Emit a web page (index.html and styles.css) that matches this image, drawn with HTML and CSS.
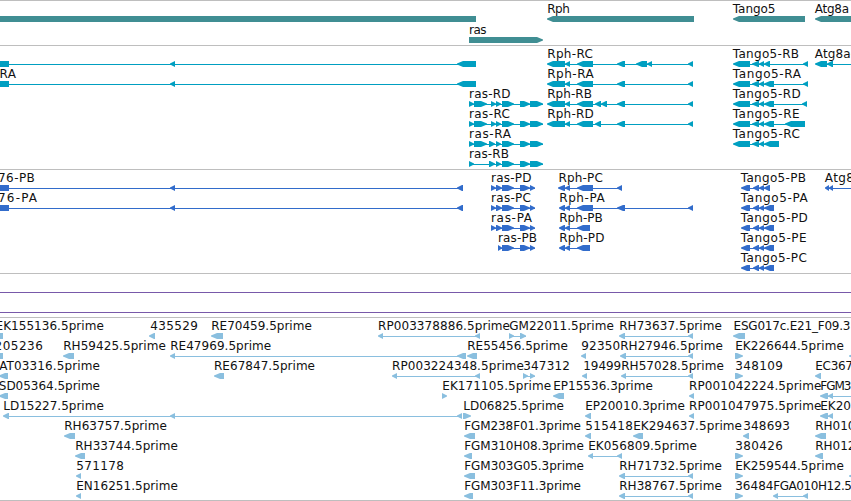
FILE: index.html
```html
<!DOCTYPE html>
<html lang="en">
<head>
  <meta charset="UTF-8">
  <title>Genome Browser</title>
  <link rel="stylesheet" href="styles.css">
</head>
<body>
  <div class="browser">
    <svg class="track genes" id="genes"></svg>
    <svg class="track transcripts" id="transcripts"></svg>
    <svg class="track proteins" id="proteins"></svg>
    <svg class="track spans" id="spans"></svg>
    <svg class="track ests" id="ests"></svg>
  </div>
  <script src="script.js"></script>
</body>
</html>
```

FILE: styles.css
```css
* { margin: 0; padding: 0; box-sizing: border-box; }
body {
  background: #fff;
  overflow: hidden;
}
.browser {
  display: flex;
  flex-direction: column;
  width: 851px;
  height: 501px;
  border-bottom: 1px solid #bebebe;
}
.track {
  display: block;
  width: 100%;
  flex: none;
  border-top: 1px solid #bebebe;
  overflow: hidden;
}
.track text {
  font-family: "DejaVu Sans", sans-serif;
  font-size: 12px;
  fill: #111;
}
.genes { height: 45px; color: #408e93; }
.transcripts { height: 124px; color: #009fc1; }
.proteins { height: 104px; color: #326ccb; }
.spans { height: 44px; color: #7859a9; }
.ests { height: 183px; color: #8abfdf; }
.glyph { fill: currentColor; }
```

FILE: script.js
```js
// feature: [row, label, label start, label end, strand, blocks, line end]
const genes = [
  [0, '', 0, 0, '-', [[-20, 476]]],
  [0, 'Rph', 547.7, 569.3, '-', [[547, 694]]],
  [0, 'Tango5', 733.3, 775, '-', [[733, 805]]],
  [0, 'Atg8a', 815.3, 848.5, '-', [[815, 870]]],
  [1, 'ras', 469.5, 486, '+', [[469, 543]]]
];

const transcripts = [
  [0, '', 0, 0, '-', [[-20, 9], [170, 175], [457, 476]]],
  [1, 'RA', 0, 15.5, '-', [[-20, 9], [170, 175], [457, 476]]],
  [2, 'ras-RD', 469.5, 510, '+', [[469, 474], [474, 487], [491, 496], [496, 501], [502, 514], [520, 530], [530, 543]]],
  [3, 'ras-RC', 469.5, 509.5, '+', [[469, 474], [474, 487], [491, 496], [496, 501], [502, 514], [520, 530], [530, 543]]],
  [4, 'ras-RA', 469.5, 510.5, '+', [[469, 474], [474, 487], [489, 495], [496, 501], [502, 514], [520, 530], [530, 543]]],
  [5, 'ras-RB', 469.5, 508.5, '+', [[469, 474], [489, 495], [496, 501], [502, 514], [520, 530], [530, 543]]],
  [0, 'Rph-RC', 547.7, 592.5, '-', [[547, 565], [565, 570], [577, 593], [617, 625], [636, 647], [647, 652], [688, 693]]],
  [1, 'Rph-RA', 547.7, 593.3, '-', [[547, 565], [565, 570], [577, 593], [617, 625], [688, 693]]],
  [2, 'Rph-RB', 547.7, 591.5, '-', [[547, 565], [565, 570], [577, 593], [595, 601], [601, 607], [617, 625], [688, 693]]],
  [3, 'Rph-RD', 547.7, 593.3, '-', [[547, 565], [565, 570], [577, 593], [595, 601], [617, 625], [688, 693]]],
  [0, 'Tango5-RB', 733.3, 798.5, '-', [[733, 750], [752, 759], [759, 764], [764, 770], [803, 808]]],
  [1, 'Tango5-RA', 733.3, 800.5, '-', [[733, 750], [752, 759], [759, 764], [764, 774], [803, 808]]],
  [2, 'Tango5-RD', 733.3, 800.3, '-', [[733, 750], [752, 759], [759, 764], [764, 774], [802, 807]]],
  [3, 'Tango5-RE', 733.3, 799, '-', [[733, 750], [752, 759], [759, 764], [764, 774], [785, 805]]],
  [4, 'Tango5-RC', 733.3, 799.3, '-', [[733, 750], [752, 759], [759, 764], [764, 779]]],
  [0, 'Atg8a-RA', 815.3, 871, '-', [[815, 827], [827, 833]], 870]
];

const proteins = [
  [0, '76-PB', -1.5, 34.3, '-', [[-20, 9], [170, 175], [457, 463]]],
  [1, '76-PA', -1.5, 36.5, '-', [[-20, 9], [170, 175], [457, 463]]],
  [0, 'ras-PD', 491.5, 531, '+', [[491, 496], [496, 502], [502, 514], [520, 530], [530, 535]]],
  [1, 'ras-PC', 491.5, 530.5, '+', [[491, 496], [496, 502], [502, 514], [520, 530], [530, 535]]],
  [2, 'ras-PA', 491.5, 531.5, '+', [[491, 496], [496, 502], [502, 514], [520, 530], [530, 535]]],
  [3, 'ras-PB', 498.5, 536.5, '+', [[498, 502], [502, 514], [520, 530], [530, 535]]],
  [0, 'Rph-PC', 559, 602.3, '-', [[558, 565], [565, 570], [577, 593], [617, 622]]],
  [1, 'Rph-PA', 559.7, 604.3, '-', [[559, 565], [565, 570], [577, 593], [617, 625], [688, 693]]],
  [2, 'Rph-PB', 559.7, 602.3, '-', [[559, 565], [565, 570], [577, 590]]],
  [3, 'Rph-PD', 559.7, 604, '-', [[559, 565], [565, 570], [577, 590]]],
  [0, 'Tango5-PB', 741.3, 805.5, '-', [[741, 750], [753, 759], [759, 764], [764, 770]]],
  [1, 'Tango5-PA', 741.3, 807.3, '-', [[741, 750], [753, 759], [759, 764], [764, 774]]],
  [2, 'Tango5-PD', 741.3, 807.3, '-', [[741, 750], [753, 759], [759, 764], [764, 774]]],
  [3, 'Tango5-PE', 741.3, 806, '-', [[741, 750], [753, 759], [759, 764], [764, 774]]],
  [4, 'Tango5-PC', 741.3, 806.3, '-', [[741, 750], [753, 759], [759, 764], [764, 774]]],
  [0, 'Atg8a-PA', 825.3, 881, '-', [[825, 829], [829, 833]], 870]
];

// unlabelled spans that cross the whole view
const spans = [
  [0, '', 0, 0, '-', [], 870],
  [1, '', 0, 0, '-', [], 870]
];

const ests = [
  [0, 'EK155136.5prime', -4, 103.3, '-', [[-8, 3]]],
  [0, '435529', 150.7, 197.3, '-', [[149, 155]]],
  [0, 'RE70459.5prime', 211.7, 311.3, '-', [[211, 223]]],
  [0, 'RP003378886.5prime', 378.5, 509.5, '-', [[378, 383], [475, 480]]],
  [0, 'GM22011.5prime', 509.7, 613.3, '+', [[509, 514], [520, 526]]],
  [0, 'RH73637.5prime', 619.7, 721.3, '-', [[619, 625], [688, 693]]],
  [0, 'ESG017c.E21_F09.3', 734, 850, '-', [[733, 745]]],
  [1, '205236', -5, 42.3, '-', [[-8, 3]]],
  [1, 'RH59425.5prime', 63.7, 165.3, '-', [[63, 74]]],
  [1, 'RE47969.5prime', 170.7, 270.7, '-', [[170, 175], [457, 466]]],
  [1, 'RE55456.5prime', 467.7, 567.3, '-', [[467, 477]]],
  [1, '92350', 581.7, 619.7, '-', [[581, 586]]],
  [1, 'RH27946.5prime', 620.7, 722.3, '-', [[620, 626], [688, 693]]],
  [1, 'EK226644.5prime', 735.7, 843.3, '+', [[735, 743]]],
  [1, '', 0, 0, '-', [[849, 856]]],
  [2, 'AT03316.5prime', -0.3, 99.5, '-', [[-1, 8]]],
  [2, 'RE67847.5prime', 214.5, 314.5, '-', [[214, 224]]],
  [2, 'RP003224348.5prime', 392.5, 523.5, '-', [[392, 397], [475, 480]]],
  [2, '347312', 523.7, 569.5, '+', [[523, 528], [530, 535]]],
  [2, '19499', 583.7, 620.7, '-', [[582, 587]]],
  [2, 'RH57028.5prime', 621.7, 723.3, '-', [[621, 626], [688, 693]]],
  [2, '348109', 735.7, 782.3, '+', [[735, 743]]],
  [2, 'EC367', 815.7, 852.5, '-', [[815, 821]]],
  [3, 'SD05364.5prime', -0.7, 99.5, '-', [[-1, 8]]],
  [3, 'EK171105.5prime', 442.7, 550.7, '+', [[442, 447]]],
  [3, 'EP15536.3prime', 553.7, 652.3, '-', [[553, 564]]],
  [3, 'RP001042224.5prime', 689.5, 821, '-', [[689, 694]]],
  [3, 'FGM3', 820.7, 851, '-', [[820, 828], [828, 833]], 870],
  [4, 'LD15227.5prime', 3.7, 103.3, '-', [[3, 9], [170, 175], [457, 462]]],
  [4, 'LD06825.5prime', 463.7, 563.5, '+', [[463, 471]]],
  [4, 'EP20010.3prime', 585.7, 684.3, '-', [[585, 591]]],
  [4, 'RP001047975.5prime', 689.5, 821, '-', [[689, 694]]],
  [4, 'EK20', 820.7, 850.5, '-', [[820, 828], [828, 833]]],
  [5, 'RH63757.5prime', 64.7, 166.3, '-', [[64, 75]]],
  [5, 'FGM238F01.3prime', 464.7, 580.5, '-', [[464, 475]]],
  [5, '515418', 585.7, 632.5, '-', [[585, 591]]],
  [5, 'EK294637.5prime', 633.7, 741.5, '-', [[633, 643]]],
  [5, '348693', 743.7, 789.5, '-', [[743, 749]]],
  [5, 'RH010', 815.7, 855, '-', [[815, 826]]],
  [6, 'RH33744.5prime', 75.7, 177.3, '-', [[75, 85]]],
  [6, 'FGM310H08.3prime', 464.7, 583.3, '-', [[464, 472]]],
  [6, 'EK056809.5prime', 588.7, 696.5, '-', [[588, 593], [617, 622]]],
  [6, '380426', 735.7, 782.3, '+', [[735, 743]]],
  [6, 'RH012', 815.7, 855, '-', [[815, 823]]],
  [7, '571178', 76.7, 123.5, '-', [[76, 81]]],
  [7, 'FGM303G05.3prime', 464.7, 583.5, '-', [[464, 475]]],
  [7, 'RH71732.5prime', 619.7, 721.3, '-', [[619, 625], [688, 693]]],
  [7, 'EK259544.5prime', 735.7, 843.3, '+', [[735, 743]]],
  [7, '', 0, 0, '-', [[849, 856]]],
  [8, 'EN16251.5prime', 76.7, 177.3, '-', [[76, 81]]],
  [8, 'FGM303F11.3prime', 464.7, 580.5, '-', [[464, 473]]],
  [8, 'RH38767.5prime', 619.7, 721.3, '-', [[619, 625], [688, 693]]],
  [8, '36484', 735.7, 773, '+', [[735, 743]]],
  [8, 'FGA010H12.5', 773.7, 851.5, '-', [[773, 778], [803, 808]]]
];

function add(svg, tag, attrs, text) {
  const el = document.createElementNS('http://www.w3.org/2000/svg', tag);
  for (const key in attrs) el.setAttribute(key, attrs[key]);
  if (text) el.textContent = text;
  svg.appendChild(el);
}

// block with an arrow head on the strand side
function blockPath(x1, x2, y, strand) {
  const head = Math.min(x2 - x1 > 6 ? 6 : 5, x2 - x1);
  if (strand === '+') {
    return `M${x1} ${y}H${x2 - head}L${x2} ${y + 2.5}V${y + 3.5}L${x2 - head} ${y + 6}H${x1}Z`;
  }
  return `M${x2} ${y}H${x1 + head}L${x1} ${y + 2.5}V${y + 3.5}L${x1 + head} ${y + 6}H${x2}Z`;
}

function drawTrack(id, features, pitch) {
  const svg = document.getElementById(id);
  for (const [row, label, start, end, strand, blocks, lineEnd] of features) {
    const y = 15 + row * pitch;
    const x1 = blocks.length ? blocks[0][0] : -1;
    const x2 = lineEnd || blocks[blocks.length - 1][1];
    if (blocks.length !== 1) {
      add(svg, 'rect', { class: 'glyph', x: x1 + 1, y: y + 3, width: x2 - x1 - 1, height: 1 });
    }
    for (const [a, b] of blocks) {
      add(svg, 'path', { class: 'glyph', d: blockPath(a, b, y, strand) });
    }
    if (label) {
      add(svg, 'text', { x: start - 0.5, y: y - 3, textLength: (end - start + 1).toFixed(1) }, label);
    }
  }
}

drawTrack('genes', genes, 21);
drawTrack('transcripts', transcripts, 20);
drawTrack('proteins', proteins, 20);
drawTrack('spans', spans, 20);
drawTrack('ests', ests, 20);
```
